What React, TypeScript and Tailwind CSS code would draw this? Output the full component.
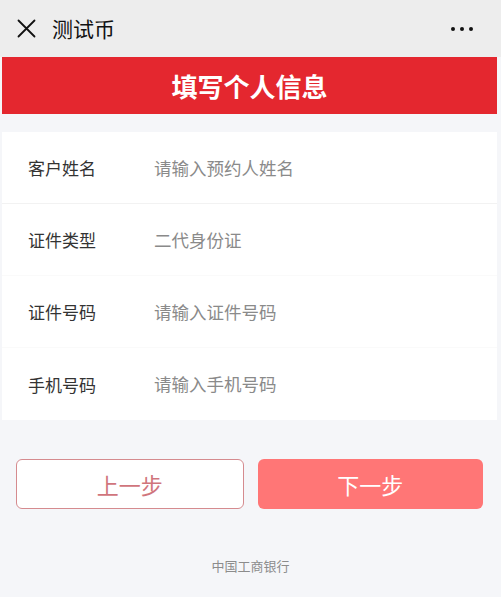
import React from "react";

const font = { fontFamily: '"Noto Sans CJK SC", "Noto Sans", sans-serif' };

const rows = [
  { label: "客户姓名", value: "请输入预约人姓名" },
  { label: "证件类型", value: "二代身份证" },
  { label: "证件号码", value: "请输入证件号码" },
  { label: "手机号码", value: "请输入手机号码" },
];

export default function App() {
  return (
    <div className="w-[501px] h-[597px] bg-[#f5f6f9] flex flex-col overflow-hidden" style={font}>
      <div className="h-[57px] bg-[#ededed] flex items-center pl-[17px] pr-[28px] shrink-0">
        <svg width="19" height="19" viewBox="0 0 19 19" className="shrink-0">
          <path d="M1.5 1.5 L17.5 17.5 M17.5 1.5 L1.5 17.5" stroke="#111" strokeWidth="1.8" strokeLinecap="round" />
        </svg>
        <span className="ml-[16px] text-[21px] text-[#111] leading-none">测试币</span>
        <div className="ml-auto flex gap-[5px] items-center">
          <span className="w-[4px] h-[4px] rounded-full bg-[#111]" />
          <span className="w-[4px] h-[4px] rounded-full bg-[#111]" />
          <span className="w-[4px] h-[4px] rounded-full bg-[#111]" />
        </div>
      </div>
      <div className="h-[57px] bg-[#e4272f] ml-[2px] mr-[4px] flex items-center justify-center shrink-0">
        <span className="text-white text-[26px] font-bold leading-none">填写个人信息</span>
      </div>
      <div className="h-[18px] shrink-0" />
      <div className="bg-white ml-[2px] mr-[4px] flex flex-col shrink-0">
        {rows.map((r, i) => (
          <div
            key={r.label}
            className={`h-[72px] flex items-center pl-[26px] ${i === 0 ? "border-b border-[#f2f2f2]" : i < rows.length - 1 ? "border-b border-[#fafafa]" : ""}`}
          >
            <span className="w-[126px] text-[17px] text-[#333] leading-none">{r.label}</span>
            <span className="text-[17.5px] text-[#8a8a8a] leading-none">{r.value}</span>
          </div>
        ))}
      </div>
      <div className="flex gap-[14px] px-[16px] pr-[18px] mt-[39px] shrink-0">
        <div className="flex-1 h-[50px] border border-[#d58b8f] rounded-[6px] bg-white flex items-center justify-center">
          <span className="text-[22px] text-[#d0757c] leading-none">上一步</span>
        </div>
        <div className="flex-1 h-[50px] rounded-[6px] bg-[#ff7676] flex items-center justify-center">
          <span className="text-[22px] text-white leading-none">下一步</span>
        </div>
      </div>
      <div className="mt-[50px] text-center text-[13px] text-[#8c8c8c] leading-none">中国工商银行</div>
    </div>
  );
}
